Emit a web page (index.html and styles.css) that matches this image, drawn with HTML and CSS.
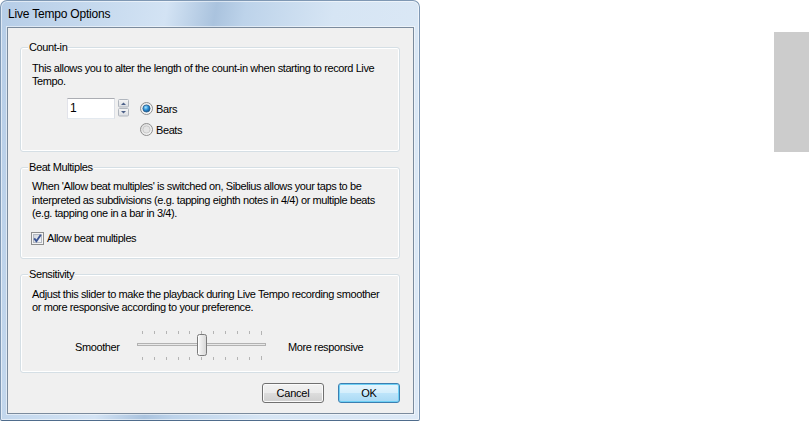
FILE: index.html
```html
<!DOCTYPE html>
<html>
<head>
<meta charset="utf-8">
<link rel="stylesheet" href="styles.css">
</head>
<body>
<div class="desktop">
  <div class="window">
    <div class="titlebar">Live Tempo Options</div>
    <div class="frame">
      <div class="client">
        <div class="group g1">
          <span class="legend">Count-in</span>
          <p class="text">This allows you to alter the length of the count-in when starting to record Live<br>Tempo.</p>
          <div class="countrow">
            <div class="input">1</div>
            <svg class="spin" width="11" height="18" viewBox="0 0 11 18">
              <defs>
                <linearGradient id="sg" x1="0" y1="0" x2="0" y2="1">
                  <stop offset="0" stop-color="#f6f6f6"/>
                  <stop offset="1" stop-color="#dadde2"/>
                </linearGradient>
              </defs>
              <rect x="0.5" y="0.5" width="10" height="7.5" rx="1" fill="url(#sg)" stroke="#b0b6be"/>
              <rect x="0.5" y="9.5" width="10" height="7.5" rx="1" fill="url(#sg)" stroke="#b0b6be"/>
              <polygon points="3,6 8,6 5.5,3.5" fill="#4c6088"/>
              <polygon points="3,12 8,12 5.5,14.5" fill="#4c6088"/>
            </svg>
            <div class="radios">
              <div class="radio">
                <svg width="13" height="13" viewBox="0 0 13 13">
                  <defs>
                    <linearGradient id="rg" x1="0" y1="0" x2="1" y2="1">
                      <stop offset="0" stop-color="#e6e6e6"/>
                      <stop offset="1" stop-color="#ffffff"/>
                    </linearGradient>
                    <radialGradient id="rb" cx="0.4" cy="0.35" r="0.7">
                      <stop offset="0" stop-color="#a8e6ff"/>
                      <stop offset="0.5" stop-color="#2b8fd6"/>
                      <stop offset="1" stop-color="#144f86"/>
                    </radialGradient>
                  </defs>
                  <circle cx="6.5" cy="6.5" r="6" fill="url(#rg)" stroke="#8f8f8f"/>
                  <circle cx="6.5" cy="6.5" r="3.6" fill="url(#rb)" stroke="#2a5d8a" stroke-width="0.8"/>
                </svg>
                <span>Bars</span>
              </div>
              <div class="radio">
                <svg width="13" height="13" viewBox="0 0 13 13">
                  <defs>
                    <linearGradient id="rg2" x1="0" y1="0" x2="1" y2="1">
                      <stop offset="0" stop-color="#d8d8d8"/>
                      <stop offset="1" stop-color="#fbfbfb"/>
                    </linearGradient>
                  </defs>
                  <circle cx="6.5" cy="6.5" r="6" fill="url(#rg2)" stroke="#8f8f8f"/>
                  <circle cx="6.5" cy="6.5" r="3.6" fill="#e4e4e4" stroke="#c2c2c2" stroke-width="0.8"/>
                </svg>
                <span>Beats</span>
              </div>
            </div>
          </div>
        </div>

        <div class="group g2">
          <span class="legend">Beat Multiples</span>
          <p class="text">When 'Allow beat multiples' is switched on, Sibelius allows your taps to be<br>interpreted as subdivisions (e.g. tapping eighth notes in 4/4) or multiple beats<br>(e.g. tapping one in a bar in 3/4).</p>
          <div class="check">
            <svg width="13" height="13" viewBox="0 0 13 13">
              <defs>
                <linearGradient id="cg" x1="0" y1="0" x2="1" y2="1">
                  <stop offset="0" stop-color="#cfd4dc"/>
                  <stop offset="1" stop-color="#f7f8fa"/>
                </linearGradient>
              </defs>
              <rect x="0.5" y="0.5" width="12" height="12" fill="#f4f4f4" stroke="#8e8f8f"/>
              <rect x="2.5" y="2.5" width="8" height="8" fill="url(#cg)" stroke="#b4b9c2"/>
              <path d="M3.2 6.4 L5.4 9.2 L9.8 2.8" fill="none" stroke="#3d5694" stroke-width="1.9"/>
            </svg>
            <span>Allow beat multiples</span>
          </div>
        </div>

        <div class="group g3">
          <span class="legend">Sensitivity</span>
          <p class="text">Adjust this slider to make the playback during Live Tempo recording smoother<br>or more responsive according to your preference.</p>
          <div class="sliderrow">
            <span class="lbl-left">Smoother</span>
            <svg class="slider" width="134" height="31" viewBox="0 0 134 31">
              <defs>
                <linearGradient id="tg" x1="0" y1="0" x2="1" y2="0">
                  <stop offset="0" stop-color="#fbfbfb"/>
                  <stop offset="0.5" stop-color="#e9e9e9"/>
                  <stop offset="1" stop-color="#d6d6d6"/>
                </linearGradient>
              </defs>
              <g stroke="#b4b4b4" stroke-width="1">
                <line x1="7.5" y1="0" x2="7.5" y2="3"/>
                <line x1="19.5" y1="0" x2="19.5" y2="3"/>
                <line x1="31.5" y1="0" x2="31.5" y2="3"/>
                <line x1="43.5" y1="0" x2="43.5" y2="3"/>
                <line x1="54.5" y1="0" x2="54.5" y2="3"/>
                <line x1="66.5" y1="0" x2="66.5" y2="3"/>
                <line x1="78.5" y1="0" x2="78.5" y2="3"/>
                <line x1="90.5" y1="0" x2="90.5" y2="3"/>
                <line x1="102.5" y1="0" x2="102.5" y2="3"/>
                <line x1="114.5" y1="0" x2="114.5" y2="3"/>
                <line x1="126.5" y1="0" x2="126.5" y2="4"/>
                <line x1="7.5" y1="26" x2="7.5" y2="29"/>
                <line x1="19.5" y1="26" x2="19.5" y2="29"/>
                <line x1="31.5" y1="26" x2="31.5" y2="29"/>
                <line x1="43.5" y1="26" x2="43.5" y2="29"/>
                <line x1="54.5" y1="26" x2="54.5" y2="29"/>
                <line x1="66.5" y1="26" x2="66.5" y2="29"/>
                <line x1="78.5" y1="26" x2="78.5" y2="29"/>
                <line x1="90.5" y1="26" x2="90.5" y2="29"/>
                <line x1="102.5" y1="26" x2="102.5" y2="29"/>
                <line x1="114.5" y1="26" x2="114.5" y2="29"/>
                <line x1="126.5" y1="25" x2="126.5" y2="29"/>
              </g>
              <rect x="2.5" y="12.5" width="128" height="2" fill="#e8e8e8" stroke="#b2b2b2"/>
              <rect x="62.5" y="3.5" width="9" height="21" rx="2" fill="url(#tg)" stroke="#7a7a7a"/>
              <line x1="63.5" y1="5" x2="63.5" y2="23" stroke="#ffffff"/>
            </svg>
            <span class="lbl-right">More responsive</span>
          </div>
        </div>

        <div class="buttons">
          <button class="btn">Cancel</button>
          <button class="btn default">OK</button>
        </div>
      </div>
    </div>
  </div>
  <div class="sidebar"></div>
</div>
</body>
</html>
```

FILE: styles.css
```css
html, body {
  margin: 0;
  padding: 0;
  background: #ffffff;
}

.desktop {
  display: flex;
  align-items: flex-start;
  width: 809px;
  height: 422px;
  font-family: "Liberation Sans", Arial, sans-serif;
  font-size: 11px;
  color: #000;
}

.window {
  width: 420px;
  height: 421px;
  box-sizing: border-box;
  border: 1px solid #7f98b4;
  border-bottom-color: #4f6c8c;
  border-radius: 7px 7px 2px 2px;
  background:
    linear-gradient(100deg, #b6cde7 0%, #c8dbef 22%, #d3e3f4 34%, #aac3de 44%, #bdd3ea 50%, #d6e5f4 68%, #dde9f6 100%);
  box-shadow: inset 0 0 0 1px rgba(255, 255, 255, 0.55);
}

.titlebar {
  height: 26px;
  line-height: 26px;
  padding-left: 7px;
  font-size: 12px;
  letter-spacing: -0.2px;
  color: #000;
}

.frame {
  padding: 0 5px 6px 6px;
}

.client {
  height: 387px;
  box-sizing: border-box;
  border: 1px solid #7b8b9d;
  background: #f0f0f0;
  box-shadow: 0 0 0 1px rgba(255, 255, 255, 0.5);
  padding: 19px 13px 0 12px;
  display: flex;
  flex-direction: column;
}

.group {
  position: relative;
  box-sizing: border-box;
  border: 1px solid #d5dfe5;
  border-radius: 3px;
  box-shadow: inset 0 0 0 1px #ffffff;
  padding-left: 11px;
  letter-spacing: -0.4px;
}

.g1 { height: 105px; padding-top: 14px; }
.g2 { height: 92px; margin-top: 15px; padding-top: 12px; }
.g3 { height: 99px; margin-top: 15px; padding-top: 13px; }

.legend {
  position: absolute;
  left: 7px;
  top: -7px;
  line-height: 13px;
  padding: 0 1px;
  background: #f0f0f0;
}

.text {
  margin: 0;
  line-height: 13px;
}

.g2 .text {
  line-height: 13.5px;
}

.countrow {
  display: flex;
  align-items: flex-start;
  margin-top: 10px;
}

.input {
  width: 48px;
  height: 21px;
  box-sizing: border-box;
  margin-left: 35px;
  border: 1px solid #abadb3;
  border-left-color: #e2e3ea;
  border-right-color: #dbdfe6;
  border-bottom-color: #e3e9ef;
  background: #ffffff;
  padding: 1px 0 0 2px;
  line-height: 16px;
  font-size: 12px;
}

.spin {
  display: block;
  margin-left: 3px;
  margin-top: 1px;
}

.radios {
  display: flex;
  flex-direction: column;
  margin-left: 11px;
}

.radio {
  display: flex;
  align-items: center;
  height: 21px;
  gap: 3px;
}

.radio svg,
.check svg {
  display: block;
  flex: none;
}

.check {
  display: flex;
  align-items: center;
  height: 15px;
  margin-top: 10px;
  margin-left: -1px;
  gap: 3px;
}

.sliderrow {
  display: flex;
  align-items: center;
  margin-top: 17px;
}

.lbl-left {
  width: 60px;
  margin-left: 43px;
}

.slider {
  display: block;
}

.lbl-right {
  margin-left: 19px;
}

.buttons {
  display: flex;
  justify-content: flex-end;
  gap: 14px;
  margin-top: 10px;
}

.btn {
  width: 62px;
  height: 20px;
  box-sizing: border-box;
  padding: 0;
  border: 1px solid #707070;
  border-radius: 3px;
  background: linear-gradient(#f2f2f2 0%, #ebebeb 50%, #dddddd 51%, #cfcfcf 100%);
  box-shadow: inset 0 0 0 1px #fbfbfb;
  font-family: "Liberation Sans", Arial, sans-serif;
  font-size: 11px;
  letter-spacing: -0.2px;
  color: #000;
}

.btn.default {
  border-color: #3c7fb1;
  background: linear-gradient(#e6f5fd 0%, #d4eefc 50%, #bde4fa 51%, #a9d9f4 100%);
  box-shadow: inset 0 0 0 1px #6fd0f5;
}

.sidebar {
  width: 35px;
  height: 120px;
  margin-top: 32px;
  margin-left: auto;
  background: #cccccc;
}
```
